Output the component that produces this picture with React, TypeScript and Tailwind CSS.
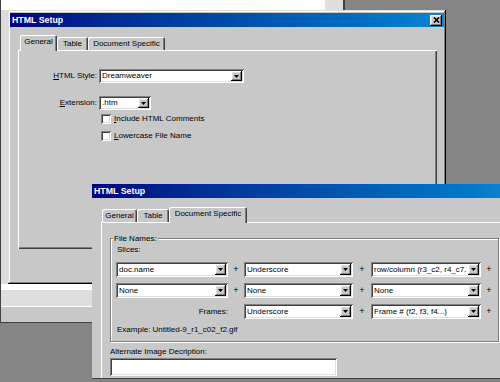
import React from "react";

const raised =
  "shadow-[inset_-1px_-1px_0_#000,inset_1px_1px_0_#fff,inset_-2px_-2px_0_#808080,inset_2px_2px_0_#dfdfdf]";
const sunken =
  "shadow-[inset_1px_1px_0_#808080,inset_-1px_-1px_0_#fff,inset_2px_2px_0_#404040,inset_-2px_-2px_0_#dfdfdf]";

function Arrow() {
  return (
    <svg width="5" height="3" viewBox="0 0 5 3" className="block">
      <polygon points="0,0 5,0 2.5,3" fill="#000" />
    </svg>
  );
}

function Select({ w, h, text }: { w: string; h: string; text: string }) {
  return (
    <div className={`flex shrink-0 items-stretch bg-white p-[2px] ${sunken} ${w} ${h}`}>
      <div className="flex min-w-0 flex-1 items-center overflow-hidden whitespace-nowrap pl-[1px] leading-none">
        {text}
      </div>
      <div className={`flex w-[11px] shrink-0 items-center justify-center bg-[#c8c8c8] ${raised}`}>
        <Arrow />
      </div>
    </div>
  );
}

function Checkbox({ children }: { children: React.ReactNode }) {
  return (
    <div className="flex items-center gap-[3px] leading-none">
      <div className={`h-[10px] w-[10px] shrink-0 bg-white ${sunken}`} />
      <span>{children}</span>
    </div>
  );
}

function Tab({ label, w, selected }: { label: string; w: string; selected?: boolean }) {
  if (selected) {
    return (
      <div
        className={`relative z-10 -mb-px flex h-[16px] items-start justify-center rounded-t-[2px] bg-[#c8c8c8] pt-[3px] leading-none shadow-[inset_1px_1px_0_#fff,inset_-1px_0_0_#404040,inset_-2px_0_0_#808080] ${w}`}
      >
        {label}
      </div>
    );
  }
  return (
    <div
      className={`flex h-[13px] items-center justify-center rounded-t-[2px] bg-[#c8c8c8] leading-none shadow-[inset_1px_1px_0_#fff,inset_-1px_0_0_#404040,inset_-2px_0_0_#808080] ${w}`}
    >
      {label}
    </div>
  );
}

function TitleBar({ close }: { close?: boolean }) {
  return (
    <div className="flex h-[14px] shrink-0 items-center justify-between bg-linear-to-r from-[#000080] to-[#1084d0] px-[2px]">
      <span className="text-[8.8px] font-bold leading-none text-white">HTML Setup</span>
      {close && (
        <div className={`flex h-[11px] w-[12px] items-center justify-center bg-[#c8c8c8] ${raised}`}>
          <svg width="7" height="6" viewBox="0 0 7 6" className="block">
            <path d="M1 0.5 L6 5.5 M6 0.5 L1 5.5" stroke="#000" strokeWidth="1.6" />
          </svg>
        </div>
      )}
    </div>
  );
}

function Plus({ w }: { w: string }) {
  return <div className={`shrink-0 text-center text-[9px] leading-none ${w}`}>+</div>;
}

export default function App() {
  return (
    <div className="relative h-[382px] w-[500px] overflow-hidden bg-[#858585] font-['Liberation_Sans',Arial,sans-serif] text-[8px] text-black">
      {/* background window */}
      <div className="absolute left-0 top-0 flex h-[323px] w-[345px] flex-col border-b border-l border-r-2 border-[#404040]">
        <div className="flex h-[10px] shrink-0">
          <div className="w-[324px] bg-white" />
          <div className="flex-1 bg-[#dfdfdf]" />
        </div>
        <div className="flex-1 bg-[#dcdcdc]" />
        <div className="h-[6px] shrink-0 bg-white" />
        <div className="h-[16px] shrink-0 bg-[#dedede]" />
        <div className="h-[1px] shrink-0 bg-white" />
        <div className="h-[15px] shrink-0 bg-[#c8c8c8]" />
      </div>

      {/* dialog 1 */}
      <div className="absolute left-[8px] top-[10px] flex h-[274px] w-[438px] flex-col bg-[#c8c8c8] px-[2px] pt-[3px] shadow-[inset_-1px_-1px_0_#000,inset_1px_1px_0_#dfdfdf,inset_-2px_-2px_0_#808080,inset_2px_2px_0_#fff]">
        <TitleBar close />
        <div className="mt-[8px] flex flex-col pl-[8px] pr-[7px]">
          <div className="flex items-end pl-[2px]">
            <Tab label="General" w="w-[37px]" selected />
            <Tab label="Table" w="w-[31px]" />
            <Tab label="Document Specific" w="w-[77px]" />
          </div>
          <div className="flex h-[199px] flex-col bg-[#c8c8c8] shadow-[inset_1px_1px_0_#fff,inset_-1px_-1px_0_#404040,inset_-2px_-2px_0_#808080]">
            <div className="mt-[19px] flex items-center">
              <div className="w-[79px] text-right leading-none">
                <u>H</u>TML Style:
              </div>
              <div className="ml-[2px]">
                <Select w="w-[145px]" h="h-[14px]" text="Dreamweaver" />
              </div>
            </div>
            <div className="mt-[13px] flex items-center">
              <div className="w-[79px] text-right leading-none">
                <u>E</u>xtension:
              </div>
              <div className="ml-[2px]">
                <Select w="w-[52px]" h="h-[14px]" text=".htm" />
              </div>
            </div>
            <div className="ml-[83px] mt-[4px]">
              <Checkbox>
                <u>I</u>nclude HTML Comments
              </Checkbox>
            </div>
            <div className="ml-[83px] mt-[7px]">
              <Checkbox>
                <u>L</u>owercase File Name
              </Checkbox>
            </div>
          </div>
        </div>
      </div>

      {/* dialog 2 */}
      <div className="absolute left-[92px] top-[184px] flex h-[195px] w-[420px] flex-col overflow-hidden border-b border-[#404040] bg-[#c8c8c8]">
        <TitleBar />
        <div className="mt-[9px] flex flex-col pl-[9px]">
          <div className="flex items-end pl-[1px]">
            <Tab label="General" w="w-[35px]" />
            <Tab label="Table" w="w-[32px]" />
            <Tab label="Document Specific" w="w-[78px]" selected />
          </div>
          <div className="flex h-[200px] flex-col bg-[#c8c8c8] pl-[9px] shadow-[inset_1px_1px_0_#fff]">
            <div className="relative mt-[16px] h-[104px] w-[389px] border border-[#808080] shadow-[inset_1px_1px_0_#fff,1px_1px_0_#fff]">
              <span className="absolute left-[2px] top-[-5px] bg-[#c8c8c8] px-[1px] leading-[10px]">
                File Names:
              </span>
              <div className="flex flex-col pl-[5px]">
                <div className="mt-[6px] pl-[1px] leading-[10px]">Slices:</div>
                <div className="mt-[7px] flex flex-col gap-[6px]">
                  <div className="flex items-center">
                    <Select w="w-[112px]" h="h-[15px]" text="doc.name" />
                    <Plus w="w-[16px]" />
                    <Select w="w-[109px]" h="h-[15px]" text="Underscore" />
                    <Plus w="w-[18px]" />
                    <Select w="w-[110px]" h="h-[15px]" text="row/column (r3_c2, r4_c7." />
                    <Plus w="w-[16px]" />
                  </div>
                  <div className="flex items-center">
                    <Select w="w-[112px]" h="h-[15px]" text="None" />
                    <Plus w="w-[16px]" />
                    <Select w="w-[109px]" h="h-[15px]" text="None" />
                    <Plus w="w-[18px]" />
                    <Select w="w-[110px]" h="h-[15px]" text="None" />
                    <Plus w="w-[16px]" />
                  </div>
                  <div className="flex items-center">
                    <div className="w-[112px] shrink-0 text-right leading-none">Frames:</div>
                    <div className="w-[16px] shrink-0" />
                    <Select w="w-[109px]" h="h-[15px]" text="Underscore" />
                    <Plus w="w-[18px]" />
                    <Select w="w-[110px]" h="h-[15px]" text="Frame # (f2, f3, f4...)" />
                    <Plus w="w-[16px]" />
                  </div>
                </div>
                <div className="mt-[6px] pl-[1px] leading-[10px]">Example: Untitled-9_r1_c02_f2.gif</div>
              </div>
            </div>
            <div className="mt-[5px] leading-[10px]">Alternate Image Decription:</div>
            <div className={`mt-[1px] h-[18px] w-[227px] bg-white ${sunken}`} />
          </div>
        </div>
      </div>
    </div>
  );
}
